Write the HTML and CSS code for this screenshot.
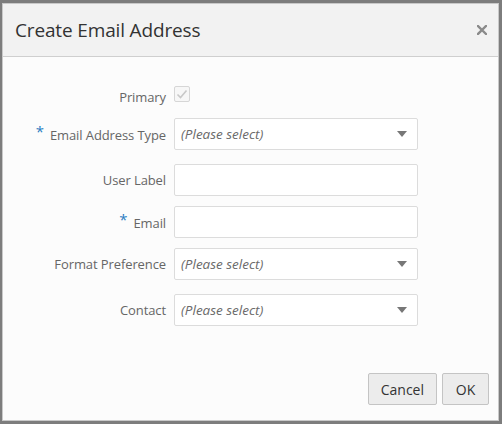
FILE: index.html
```html
<!DOCTYPE html>
<html lang="en">
<head>
<meta charset="utf-8">
<title>Create Email Address</title>
<link rel="stylesheet" href="styles.css">
</head>
<body>
<div class="dialog">
  <div class="dialog-header">
    <h1 class="dialog-title">Create Email Address</h1>
    <button class="close-btn" aria-label="Close">
      <svg width="10" height="10" viewBox="0 0 10 10"><path d="M1 1L9 9M9 1L1 9" stroke="#8a8a8a" stroke-width="2.4" stroke-linecap="square"/></svg>
    </button>
  </div>
  <div class="dialog-body">
    <div class="form">
      <div class="row row-check">
        <label class="label">Primary</label>
        <div class="control">
          <span class="checkbox">
            <svg width="14" height="14" viewBox="0 0 14 14"><path d="M2.5 7.5L5.5 10.5L11.5 3.5" fill="none" stroke="#c8c8c8" stroke-width="1.6"/></svg>
          </span>
        </div>
      </div>
      <div class="row row-select">
        <label class="label"><span class="req">*</span>Email Address Type</label>
        <div class="control select"><span class="placeholder">(Please select)</span><span class="arrow"></span></div>
      </div>
      <div class="row">
        <label class="label">User Label</label>
        <div class="control input"></div>
      </div>
      <div class="row">
        <label class="label"><span class="req">*</span>Email</label>
        <div class="control input"></div>
      </div>
      <div class="row row-select">
        <label class="label">Format Preference</label>
        <div class="control select"><span class="placeholder">(Please select)</span><span class="arrow"></span></div>
      </div>
      <div class="row row-select">
        <label class="label">Contact</label>
        <div class="control select"><span class="placeholder">(Please select)</span><span class="arrow"></span></div>
      </div>
    </div>
    <div class="footer">
      <button class="btn">Cancel</button>
      <button class="btn btn-ok">OK</button>
    </div>
  </div>
</div>
</body>
</html>
```
FILE: styles.css
```css
html, body {
  margin: 0;
  height: 100%;
}
body {
  background: #7d7d7d;
  padding: 3px 3px 3px 2px;
  box-sizing: border-box;
  font-family: "Open Sans", "Noto Sans", sans-serif;
  display: flex;
}
.dialog {
  flex: 1;
  display: flex;
  flex-direction: column;
  border: 1px solid #c9c9c9;
  background: #fcfcfc;
}
.dialog-header {
  height: 52px;
  background: #f2f2f2;
  border-bottom: 1px solid #cfcfcf;
  display: flex;
  align-items: center;
  justify-content: space-between;
  padding: 0 11px 0 12px;
}
.dialog-title {
  margin: 0;
  font-size: 19px;
  font-weight: 400;
  color: #333;
  letter-spacing: -0.15px;
}
.close-btn {
  background: none;
  border: none;
  padding: 0;
  width: 10px;
  height: 10px;
  display: flex;
}
.dialog-body {
  flex: 1;
  display: flex;
  flex-direction: column;
}
.form {
  padding-top: 25px;
  display: flex;
  flex-direction: column;
  gap: 10px;
}
.row {
  display: flex;
  align-items: center;
  gap: 8px;
}
.row-check {
  height: 24px;
  margin-bottom: 2px;
}
.row-select {
  margin-bottom: 4px;
}
.label {
  width: 163px;
  text-align: right;
  font-size: 13px;
  letter-spacing: -0.1px;
  color: #666;
}
.row-check .label {
  padding-top: 5px;
}
.req {
  color: #2b7cc2;
  font-size: 15px;
  margin-right: 6px;
  position: relative;
  top: -3px;
}
.control {
  width: 244px;
  height: 32px;
  box-sizing: border-box;
}
.row-check .control {
  height: auto;
  display: flex;
}
.checkbox {
  width: 16px;
  height: 16px;
  box-sizing: border-box;
  border: 1px solid #d6d6d6;
  border-radius: 2px;
  background: #f7f7f7;
  display: flex;
  align-items: center;
  justify-content: center;
}
.input, .select {
  border: 1px solid #dcdcdc;
  border-radius: 2px;
  background: #fff;
}
.select {
  display: flex;
  align-items: center;
  justify-content: space-between;
  padding: 0 10px 0 6px;
}
.placeholder {
  font-style: italic;
  font-size: 13.5px;
  color: #6a6a6a;
}
.arrow {
  width: 0;
  height: 0;
  border-left: 5px solid transparent;
  border-right: 5px solid transparent;
  border-top: 6px solid #777;
}
.footer {
  margin-top: auto;
  display: flex;
  justify-content: flex-end;
  gap: 5px;
  padding: 0 9px 15px 0;
}
.btn {
  height: 32px;
  min-width: 68px;
  padding: 0 12px;
  background: #ececec;
  border: 1px solid #c4c4c4;
  border-radius: 2px;
  font-family: inherit;
  font-size: 14px;
  color: #333;
}
.btn-ok {
  min-width: 47px;
}
```
